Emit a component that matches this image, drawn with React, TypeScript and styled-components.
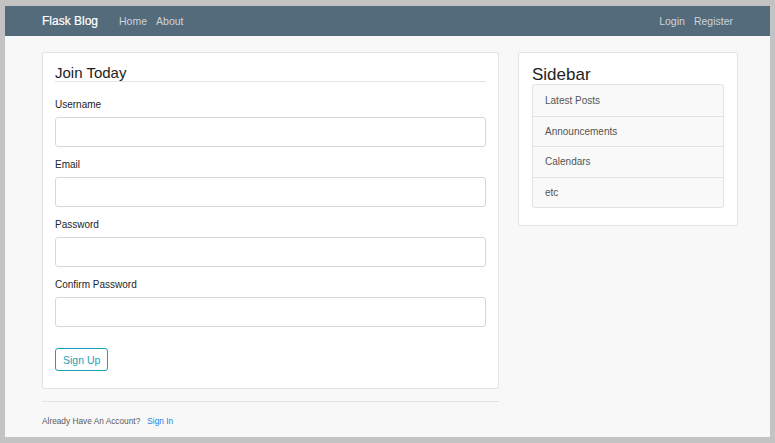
import React from "react";
import styled, { createGlobalStyle } from "styled-components";

const GlobalStyle = createGlobalStyle`
    * {
        box-sizing: border-box;
    }
    body {
        margin: 0;
        background: #c3c3c3;
        font-family: "Liberation Sans", Arial, sans-serif;
        color: #212529;
    }
`;

const Frame = styled.div`
    padding: 6px 5px 6px 5px;
    height: 443px;
`;

const Page = styled.div`
    height: 431px;
    background: #f8f8f8;
    overflow: hidden;
`;

const NavBar = styled.nav`
    height: 30px;
    background: #536b7b;
    display: flex;
    align-items: center;
    padding: 0 37px;
`;

const Brand = styled.a`
    color: #ffffff;
    font-size: 12px;
    margin-right: 21px;
    -webkit-text-stroke: 0.2px #ffffff;
`;

const NavGroup = styled.div<{ $right?: boolean }>`
    display: flex;
    gap: 9px;
    margin-left: ${(p) => (p.$right ? "auto" : "0")};
`;

const NavLink = styled.a`
    color: #cdd4d9;
    font-size: 10.5px;
`;

const Main = styled.main`
    display: grid;
    grid-template-columns: 457px 220px;
    column-gap: 19px;
    padding: 16px 37px 0;
    align-items: start;
`;

const Card = styled.div<{ $pad: number }>`
    background: #ffffff;
    border: 1px solid #e3e3e3;
    border-radius: 2px;
    padding: ${(p) => p.$pad}px;
`;

const Legend = styled.div`
    font-size: 15px;
    line-height: 16px;
    color: #222;
    border-bottom: 1px solid #e2e4e6;
    margin-bottom: 16px;
`;

const Field = styled.div`
    margin-bottom: 11px;
`;

const Label = styled.label`
    display: block;
    font-size: 10px;
    line-height: 14px;
    margin-bottom: 5px;
    color: #212529;
`;

const Input = styled.input`
    display: block;
    width: 100%;
    height: 30px;
    border: 1px solid #d4d8dc;
    border-radius: 3px;
    background: #fff;
    outline: none;
`;

const SubmitButton = styled.button`
    margin-top: 10px;
    margin-bottom: 5px;
    height: 23px;
    padding: 0 7px;
    font-family: inherit;
    font-size: 10.5px;
    color: #17a2b8;
    background: #fff;
    border: 1px solid #17a2b8;
    border-radius: 3px;
`;

const Footer = styled.div`
    margin-top: 12px;
    border-top: 1px solid #e2e2e2;
    padding-top: 14px;
    font-size: 8.3px;
    color: #5a5a5a;
`;

const SignInLink = styled.a`
    color: #1a7fe8;
    margin-left: 7px;
`;

const SidebarTitle = styled.h3`
    margin: 0;
    font-size: 17px;
    line-height: 18px;
    font-weight: normal;
    color: #222;
`;

const ListGroup = styled.ul`
    list-style: none;
    margin: 0 0 4px;
    padding: 0;
    border: 1px solid #e2e2e2;
    border-radius: 3px;
    background: #f9f9f9;
`;

const ListItem = styled.li`
    height: 30.5px;
    display: flex;
    align-items: center;
    padding-left: 12px;
    font-size: 10px;
    color: #555;
    & + & {
        border-top: 1px solid #e2e2e2;
    }
`;

const fields = ["Username", "Email", "Password", "Confirm Password"];
const links = ["Latest Posts", "Announcements", "Calendars", "etc"];

const App: React.FC = () => {
    return (
        <Frame>
            <GlobalStyle />
            <Page>
                <NavBar>
                    <Brand>Flask Blog</Brand>
                    <NavGroup>
                        <NavLink>Home</NavLink>
                        <NavLink>About</NavLink>
                    </NavGroup>
                    <NavGroup $right>
                        <NavLink>Login</NavLink>
                        <NavLink>Register</NavLink>
                    </NavGroup>
                </NavBar>
                <Main>
                    <div>
                        <Card $pad={12}>
                            <Legend>Join Today</Legend>
                            {fields.map((f) => (
                                <Field key={f}>
                                    <Label>{f}</Label>
                                    <Input type={f.includes("Password") ? "password" : "text"} />
                                </Field>
                            ))}
                            <SubmitButton>Sign Up</SubmitButton>
                        </Card>
                        <Footer>
                            Already Have An Account?
                            <SignInLink>Sign In</SignInLink>
                        </Footer>
                    </div>
                    <Card $pad={13}>
                        <SidebarTitle>Sidebar</SidebarTitle>
                        <ListGroup>
                            {links.map((l) => (
                                <ListItem key={l}>{l}</ListItem>
                            ))}
                        </ListGroup>
                    </Card>
                </Main>
            </Page>
        </Frame>
    );
};

export default App;
